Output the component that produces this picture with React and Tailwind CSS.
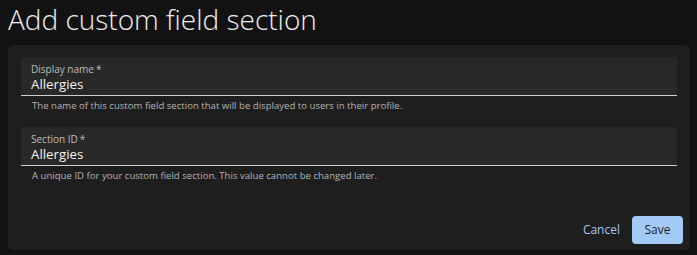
export default function App() {
  const font = { fontFamily: '"Open Sans", "Noto Sans", sans-serif' };
  const Field = ({ label, value, help }) => (
    <div>
      <div className="h-[39px] bg-[#282828] rounded-t-[3px] border-b border-[#cfcfcf] px-[10px] pt-[5px]">
        <div className="text-[10px] leading-[14px] text-[#bdbdbd]">
          {label}
          <span className="ml-[2px]">*</span>
        </div>
        <div className="text-[13.3px] leading-[17px] text-[#f2f2f2]">{value}</div>
      </div>
      <div className="px-[11px] pt-[3px] text-[9.6px] leading-[14px] text-[#b4b4b4]">{help}</div>
    </div>
  );
  return (
    <div className="w-[697px] h-[255px] bg-[#121212] px-[8px] pt-[1px] overflow-hidden" style={font}>
      <h1 className="text-[28px] leading-[36px] font-light text-[#ededed]">
        Add custom field section
      </h1>
      <div className="mt-[8px] w-[682px] h-[205px] bg-[#1e1e1e] rounded-[5px] px-[13px] pt-[12px] flex flex-col">
        <Field
          label="Display name"
          value="Allergies"
          help="The name of this custom field section that will be displayed to users in their profile."
        />
        <div className="mt-[14px]">
          <Field
            label="Section ID"
            value="Allergies"
            help="A unique ID for your custom field section. This value cannot be changed later."
          />
        </div>
        <div className="mt-auto mb-[6px] flex justify-end items-center gap-[12px] -mr-[6px]">
          <button className="text-[12px] text-[#a6c8f2]">Cancel</button>
          <button className="w-[51px] h-[28px] rounded-[4px] bg-[#a3c9f6] text-[12px] text-[#1c1f24]">
            Save
          </button>
        </div>
      </div>
    </div>
  );
}
